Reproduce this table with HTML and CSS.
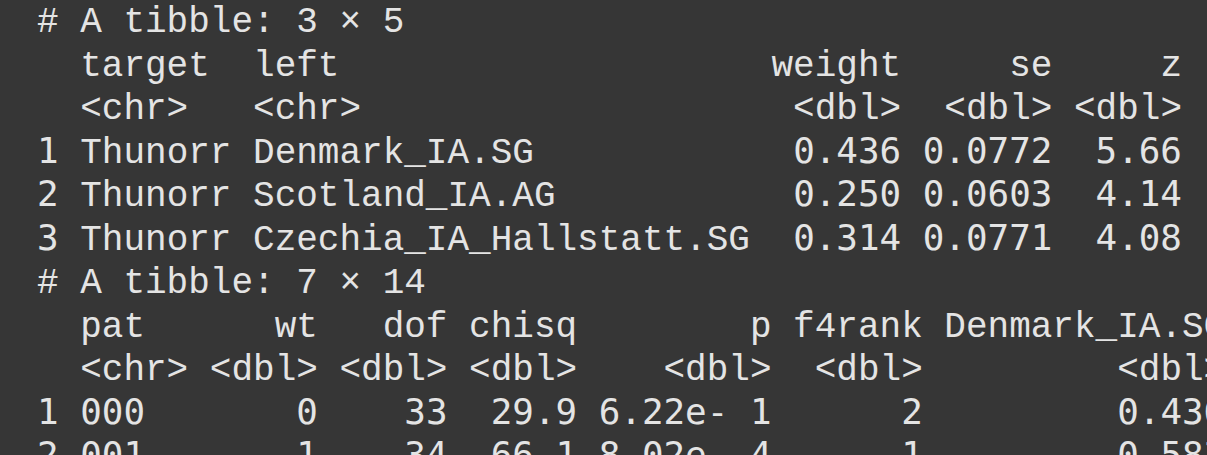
FILE: index.html
```html
<!DOCTYPE html>
<html lang="en">
<head>
<meta charset="utf-8">
<title>R console</title>
<link rel="stylesheet" href="styles.css">
</head>
<body>
<div class="console">
<div class="line"># A tibble: 3 × 5</div>
<div class="line">  target  left                    weight     se     z</div>
<div class="line">  &lt;chr&gt;   &lt;chr&gt;                    &lt;dbl&gt;  &lt;dbl&gt; &lt;dbl&gt;</div>
<div class="line"><span class="n">1</span> Thunorr Denmark_IA.SG            <span class="n">0.436</span> <span class="n">0.0772</span>  <span class="n">5.66</span></div>
<div class="line"><span class="n">2</span> Thunorr Scotland_IA.AG           <span class="n">0.250</span> <span class="n">0.0603</span>  <span class="n">4.14</span></div>
<div class="line"><span class="n">3</span> Thunorr Czechia_IA_Hallstatt.SG  <span class="n">0.314</span> <span class="n">0.0771</span>  <span class="n">4.08</span></div>
<div class="line"># A tibble: 7 × 14</div>
<div class="line">  pat      wt   dof chisq        p f4rank Denmark_IA.SG</div>
<div class="line">  &lt;chr&gt; &lt;dbl&gt; &lt;dbl&gt; &lt;dbl&gt;    &lt;dbl&gt;  &lt;dbl&gt;         &lt;dbl&gt;</div>
<div class="line"><span class="n">1</span> <span class="n">000</span>       <span class="n">0</span>    <span class="n">33</span>  <span class="n">29.9</span> <span class="n">6.22e- 1</span>      <span class="n">2</span>         <span class="n">0.436</span></div>
<div class="line"><span class="n">2</span> <span class="n">001</span>       <span class="n">1</span>    <span class="n">34</span>  <span class="n">66.1</span> <span class="n">8.02e- 4</span>      <span class="n">1</span>         <span class="n">0.583</span></div>
</div>
</body>
</html>
```
FILE: styles.css
```css
html, body {
  margin: 0;
  padding: 0;
  background: #363636;
  overflow: hidden;
}

.console {
  padding: 1px 0 0 37px;
  font-family: "Courier", "Nimbus Mono PS", "Nimbus Mono L", "FreeMono", "Courier 10 Pitch", "TeX Gyre Cursor", "Liberation Mono", monospace;
  font-size: 36px;
  line-height: 43.5px;
  color: #e4e4e4;
}

.line {
  white-space: pre;
  height: 43.5px;
}

.n {
  font-family: "DejaVu Sans Mono", monospace;
  font-size: 35.88px;
  line-height: 1;
}
```
